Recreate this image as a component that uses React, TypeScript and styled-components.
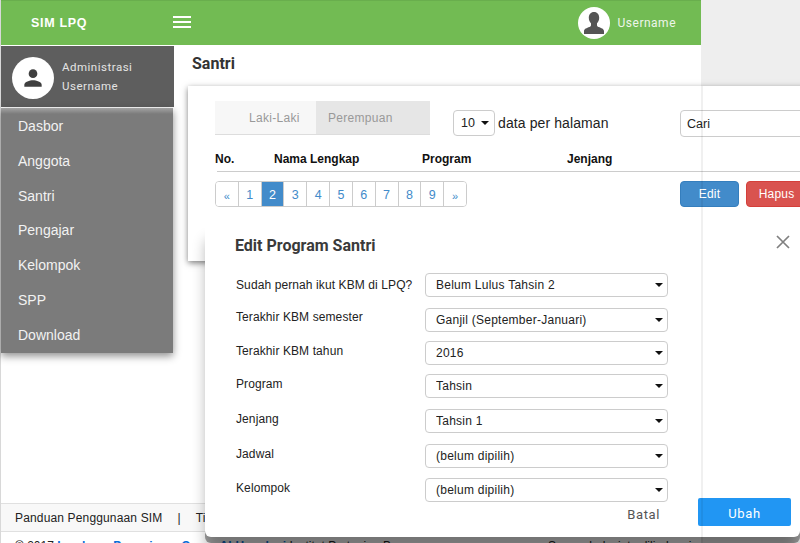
import React from 'react'
import styled, { createGlobalStyle } from 'styled-components'

const GlobalStyle = createGlobalStyle`
  html, body {
    margin: 0;
    padding: 0;
    background: #fff;
  }
  * {
    box-sizing: border-box;
  }
`

const sans = `"Liberation Sans", Arial, sans-serif`
const roboto = `Roboto, "Liberation Sans", sans-serif`

const Page = styled.div`
  position: relative;
  width: 800px;
  height: 543px;
  overflow: hidden;
  background: #eeeeee;
  font-family: ${sans};
`

const Frame = styled.div`
  width: 701px;
  height: 543px;
  background: #fff;
  border-left: 1px solid #d8d8d8;
  display: flex;
  flex-direction: column;
`

const Header = styled.header`
  height: 45px;
  flex: none;
  background: #72bb53;
  border-top: 1px solid #69ae4d;
  display: flex;
  align-items: center;
  color: #fff;
`

const Brand = styled.div`
  width: 172px;
  padding-left: 30px;
  font-size: 12.5px;
  font-weight: bold;
  letter-spacing: 0.7px;
`

const Burger = styled.div`
  width: 18px;
  height: 12px;
  margin-top: -2px;
  border-top: 2px solid #fff;
  border-bottom: 2px solid #fff;
  position: relative;
  &::after {
    content: '';
    position: absolute;
    left: 0;
    right: 0;
    top: 3px;
    height: 2px;
    background: #fff;
  }
`

const HeaderUser = styled.div`
  margin-left: auto;
  margin-right: 25px;
  display: flex;
  align-items: center;
  gap: 8px;
  font-family: ${roboto};
  font-size: 12px;
  letter-spacing: 0.5px;
  color: #eef6ea;
`

const Avatar = styled.div<{ $size: number }>`
  width: ${(p) => p.$size}px;
  height: ${(p) => p.$size}px;
  border-radius: 50%;
  background: #fff;
  display: flex;
  align-items: center;
  justify-content: center;
  flex: none;
`

const Body = styled.div`
  flex: 1;
  min-height: 0;
  margin-top: 1px;
  display: flex;
`

const Sidebar = styled.aside`
  width: 173px;
  flex: none;
`

const Profile = styled.div`
  height: 61px;
  padding: 2px 0 0 11px;
  background: #5e5e5e;
  display: flex;
  align-items: center;
  gap: 8px;
  color: #e4e4e4;
  font-family: ${roboto};
  font-size: 11.5px;
  letter-spacing: 0.5px;
`

const ProfileText = styled.div`
  display: flex;
  flex-direction: column;
  gap: 5px;
  line-height: 14px;
  margin-top: -3px;
`

const Menu = styled.nav`
  width: 172px;
  height: 245px;
  margin-top: 1px;
  padding-top: 1px;
  background: linear-gradient(#a3a3a3 0, #7b7b7b 6px);
  box-shadow: 0 3px 8px rgba(0, 0, 0, 0.45);
`

const MenuItem = styled.a`
  display: block;
  height: 34.8px;
  line-height: 34.8px;
  padding-left: 17px;
  font-size: 14px;
  color: #f2f2f2;
`

const Content = styled.main`
  flex: 1;
  min-width: 0;
  padding-left: 14px;
`

const PageTitle = styled.h1`
  margin: 0;
  height: 40px;
  padding-left: 4px;
  font-family: ${roboto};
  font-size: 16px;
  line-height: 36px;
  font-weight: 700;
  color: #333;
`

const Card = styled.section`
  width: 660px;
  height: 175px;
  padding: 15px 27px 0;
  background: #fff;
  box-shadow: 0 2px 6px rgba(0, 0, 0, 0.5);
`

const Toolbar = styled.div`
  display: grid;
  grid-template-columns: 238px 227px 1fr;
  height: 36px;
`

const Tabs = styled.div`
  display: flex;
  width: 215px;
  height: 34px;
  border-bottom: 1px solid #ddd;
`

const Tab = styled.div<{ $active?: boolean }>`
  width: ${(p) => (p.$active ? 114 : 101)}px;
  padding-left: ${(p) => (p.$active ? 12 : 34)}px;
  background: ${(p) => (p.$active ? '#e6e6e6' : '#f7f7f7')};
  color: #999;
  font-size: 12px;
  letter-spacing: 0.3px;
  line-height: 35px;
`

const PerPage = styled.div`
  display: flex;
  align-items: center;
  height: 26px;
  margin-top: 9px;
  gap: 3px;
  font-size: 14px;
  letter-spacing: 0.1px;
  color: #222;
`

const PerPageButton = styled.div`
  width: 42px;
  height: 26px;
  padding-left: 7px;
  border: 1px solid #ccc;
  border-radius: 4px;
  display: flex;
  align-items: center;
  gap: 6px;
  font-size: 12.5px;
  letter-spacing: 0;
`

const Caret = styled.span`
  width: 0;
  height: 0;
  border-left: 4px solid transparent;
  border-right: 4px solid transparent;
  border-top: 4px solid #111;
`

const Search = styled.input`
  width: 200px;
  height: 27px;
  margin-top: 9px;
  padding: 1px 6px 0;
  border: 1px solid #ccc;
  border-radius: 4px;
  font-family: ${sans};
  font-size: 12.5px;
  color: #222;
  outline: none;
  &::placeholder {
    color: #222;
    opacity: 1;
  }
`

const TableHead = styled.div`
  display: grid;
  grid-template-columns: 59px 148px 145px 1fr;
  height: 34px;
  padding-top: 15px;
  font-size: 12px;
  font-weight: bold;
  line-height: 14px;
  color: #111;
`

const HeadLine = styled.div`
  height: 1px;
  margin-left: 2px;
  background: #ccc;
`

const ActionRow = styled.div`
  display: flex;
  margin-top: 9px;
`

const Pagination = styled.div`
  display: flex;
  height: 26px;
  width: 252px;
  border: 1px solid #ccc;
  border-radius: 4px;
  overflow: hidden;
`

const PageCell = styled.a<{ $active?: boolean; $small?: boolean }>`
  flex: 1;
  display: flex;
  align-items: center;
  justify-content: center;
  padding-top: ${(p) => (p.$small ? 3 : 1)}px;
  font-size: ${(p) => (p.$small ? 11 : 12.5)}px;
  color: ${(p) => (p.$active ? '#fff' : '#428bca')};
  background: ${(p) => (p.$active ? '#428bca' : '#fff')};
  border-left: 1px solid #ccc;
  &:first-child {
    border-left: none;
  }
`

const Actions = styled.div`
  margin-left: 213px;
  display: flex;
  gap: 7px;
`

const ActionButton = styled.button<{ $danger?: boolean }>`
  width: ${(p) => (p.$danger ? 61 : 59)}px;
  height: 26px;
  padding: 0;
  border: 1px solid ${(p) => (p.$danger ? '#d43f3a' : '#357ebd')};
  border-radius: 4px;
  background: ${(p) => (p.$danger ? '#d9534f' : '#428bca')};
  color: #fff;
  font-family: ${sans};
  font-size: 12px;
  letter-spacing: 0.2px;
`

const Footer = styled.footer`
  flex: none;
  height: 40px;
  font-size: 12px;
  color: #222;
`

const FooterLinks = styled.div`
  height: 29px;
  padding-left: 14px;
  display: flex;
  align-items: center;
  gap: 15px;
  background: #f8f8f8;
  border-top: 1px solid #e0e0e0;
  border-bottom: 1px solid #e0e0e0;
  letter-spacing: 0.15px;
`

const Copyright = styled.div`
  padding: 7px 0 0 14px;
  line-height: 14px;
  white-space: nowrap;
  a {
    color: #0a6fd8;
    font-weight: bold;
  }
`

const Rights = styled.span`
  margin-left: 133px;
`

const Modal = styled.div`
  position: absolute;
  left: 205px;
  top: 222px;
  width: 595px;
  height: 315px;
  padding: 15px 9px 0 30px;
  background: #fff;
  border-radius: 6px;
  box-shadow: -1px 16px 14px -2px rgba(0, 0, 0, 0.3), 0 6px 0 0 rgba(0, 0, 0, 0.35);
  font-family: ${sans};
`

const ModalTitle = styled.h2`
  margin: 0 0 19px;
  height: 17px;
  font-family: ${roboto};
  font-size: 16px;
  line-height: 18px;
  font-weight: 700;
  color: #3a3a3a;
`

const CloseIcon = styled.svg`
  position: absolute;
  right: 10px;
  top: 13px;
  width: 14px;
  height: 14px;
`

const FieldRow = styled.div<{ $gap: number }>`
  display: grid;
  grid-template-columns: 190px 243px;
  margin-top: ${(p) => p.$gap}px;
  height: 24px;
`

const FieldLabel = styled.label<{ $up: number }>`
  padding-left: 1px;
  font-size: 12px;
  letter-spacing: 0.1px;
  line-height: 24px;
  color: #222;
  margin-top: -${(p) => p.$up}px;
`

const SelectWrap = styled.div`
  position: relative;
  &::after {
    content: '';
    position: absolute;
    right: 5px;
    top: 10px;
    border-left: 4px solid transparent;
    border-right: 4px solid transparent;
    border-top: 4px solid #111;
    pointer-events: none;
  }
`

const Select = styled.select`
  appearance: none;
  width: 100%;
  height: 24px;
  padding: 0 0 0 10px;
  background: #fff;
  border: 1px solid #ccc;
  border-radius: 4px;
  font-family: ${sans};
  font-size: 12px;
  letter-spacing: 0.25px;
  color: #222;
  outline: none;
`

const ModalFooter = styled.div`
  margin-top: -4px;
  display: flex;
  justify-content: flex-end;
  align-items: center;
  height: 28px;
`

const CancelButton = styled.button`
  padding: 0;
  margin: 5px 38px 0 0;
  border: none;
  background: none;
  font-family: ${roboto};
  font-size: 13px;
  letter-spacing: 0.6px;
  color: #555;
`

const SubmitButton = styled.button`
  width: 93px;
  height: 28px;
  padding: 3px 0 0;
  border: none;
  border-radius: 2px;
  background: #2196f3;
  color: #fff;
  font-family: ${roboto};
  font-size: 13px;
  letter-spacing: 0.6px;
`

const EdgeLine = styled.div`
  position: absolute;
  left: 701px;
  top: 86px;
  bottom: 0;
  width: 2px;
  background: rgba(0, 0, 0, 0.06);
`

const PersonRound = () => (
  <svg width="26" height="26" viewBox="0 0 24 24" fill="#3f3f3f">
    <circle cx="12" cy="8" r="4" />
    <path d="M12 14c-3 0-8 1.5-8 4.2V20h16v-1.8C20 15.5 15 14 12 14z" />
  </svg>
)

const PersonBust = () => (
  <svg width="24" height="26" viewBox="0 0 24 26" fill="#555">
    <path d="M12 2c-3.3 0-5.2 2.6-5.2 5.8 0 2.4 1 4.2 2.2 5.4v2.1c0 .8-.6 1.3-1.6 1.7-2.6 1-5.4 1.8-5.4 4.2V24h20v-2.8c0-2.4-2.8-3.2-5.4-4.2-1-.4-1.6-.9-1.6-1.7v-2.1c1.200-1.200 2.200-3 2.200-5.400C17.200 4.600 15.300 2 12 2z" />
  </svg>
)

const menu: string[] = ['Dasbor', 'Anggota', 'Santri', 'Pengajar', 'Kelompok', 'SPP', 'Download']
const pages: string[] = ['«', '1', '2', '3', '4', '5', '6', '7', '8', '9', '»']

const fields = [
  { label: 'Sudah pernah ikut KBM di LPQ?', value: 'Belum Lulus Tahsin 2', gap: 0, up: 0 },
  { label: 'Terakhir KBM semester', value: 'Ganjil (September-Januari)', gap: 11, up: 3 },
  { label: 'Terakhir KBM tahun', value: '2016', gap: 9, up: 2 },
  { label: 'Program', value: 'Tahsin', gap: 9, up: 2 },
  { label: 'Jenjang', value: 'Tahsin 1', gap: 11, up: 2 },
  { label: 'Jadwal', value: '(belum dipilih)', gap: 11, up: 2 },
  { label: 'Kelompok', value: '(belum dipilih)', gap: 10, up: 2 },
]

const App = () => {
  return (
    <Page>
      <GlobalStyle />
      <Frame>
        <Header>
          <Brand>SIM LPQ</Brand>
          <Burger />
          <HeaderUser>
            <Avatar $size={32}>
              <PersonBust />
            </Avatar>
            Username
          </HeaderUser>
        </Header>
        <Body>
          <Sidebar>
            <Profile>
              <Avatar $size={42}>
                <PersonRound />
              </Avatar>
              <ProfileText>
                <span>Administrasi</span>
                <span>Username</span>
              </ProfileText>
            </Profile>
            <Menu>
              {menu.map((item) => (
                <MenuItem key={item}>{item}</MenuItem>
              ))}
            </Menu>
          </Sidebar>
          <Content>
            <PageTitle>Santri</PageTitle>
            <Card>
              <Toolbar>
                <Tabs>
                  <Tab>Laki-Laki</Tab>
                  <Tab $active>Perempuan</Tab>
                </Tabs>
                <PerPage>
                  <PerPageButton>
                    10
                    <Caret />
                  </PerPageButton>
                  data per halaman
                </PerPage>
                <Search placeholder="Cari" />
              </Toolbar>
              <TableHead>
                <span>No.</span>
                <span>Nama Lengkap</span>
                <span>Program</span>
                <span>Jenjang</span>
              </TableHead>
              <HeadLine />
              <ActionRow>
                <Pagination>
                  {pages.map((p) => (
                    <PageCell key={p} $active={p === '2'} $small={p === '«' || p === '»'}>
                      {p}
                    </PageCell>
                  ))}
                </Pagination>
                <Actions>
                  <ActionButton>Edit</ActionButton>
                  <ActionButton $danger>Hapus</ActionButton>
                </Actions>
              </ActionRow>
            </Card>
          </Content>
        </Body>
        <Footer>
          <FooterLinks>
            <span>Panduan Penggunaan SIM</span>
            <span>|</span>
            <span>Tim Pengembang</span>
          </FooterLinks>
          <Copyright>
            © 2017 <a>Lembaga Pengajaran Quran Al-Hamdani</a> Institut Pertanian Bogor
            <Rights>Semua hak cipta dilindungi</Rights>
          </Copyright>
        </Footer>
      </Frame>
      <Modal>
        <ModalTitle>Edit Program Santri</ModalTitle>
        <CloseIcon viewBox="0 0 14 14">
          <path d="M1 1l12 12M13 1L1 13" stroke="#808080" strokeWidth="1.7" fill="none" />
        </CloseIcon>
        {fields.map((f) => (
          <FieldRow key={f.label} $gap={f.gap}>
            <FieldLabel $up={f.up}>{f.label}</FieldLabel>
            <SelectWrap>
              <Select defaultValue={f.value}>
                <option>{f.value}</option>
              </Select>
            </SelectWrap>
          </FieldRow>
        ))}
        <ModalFooter>
          <CancelButton>Batal</CancelButton>
          <SubmitButton>Ubah</SubmitButton>
        </ModalFooter>
      </Modal>
      <EdgeLine />
    </Page>
  )
}

export default App
